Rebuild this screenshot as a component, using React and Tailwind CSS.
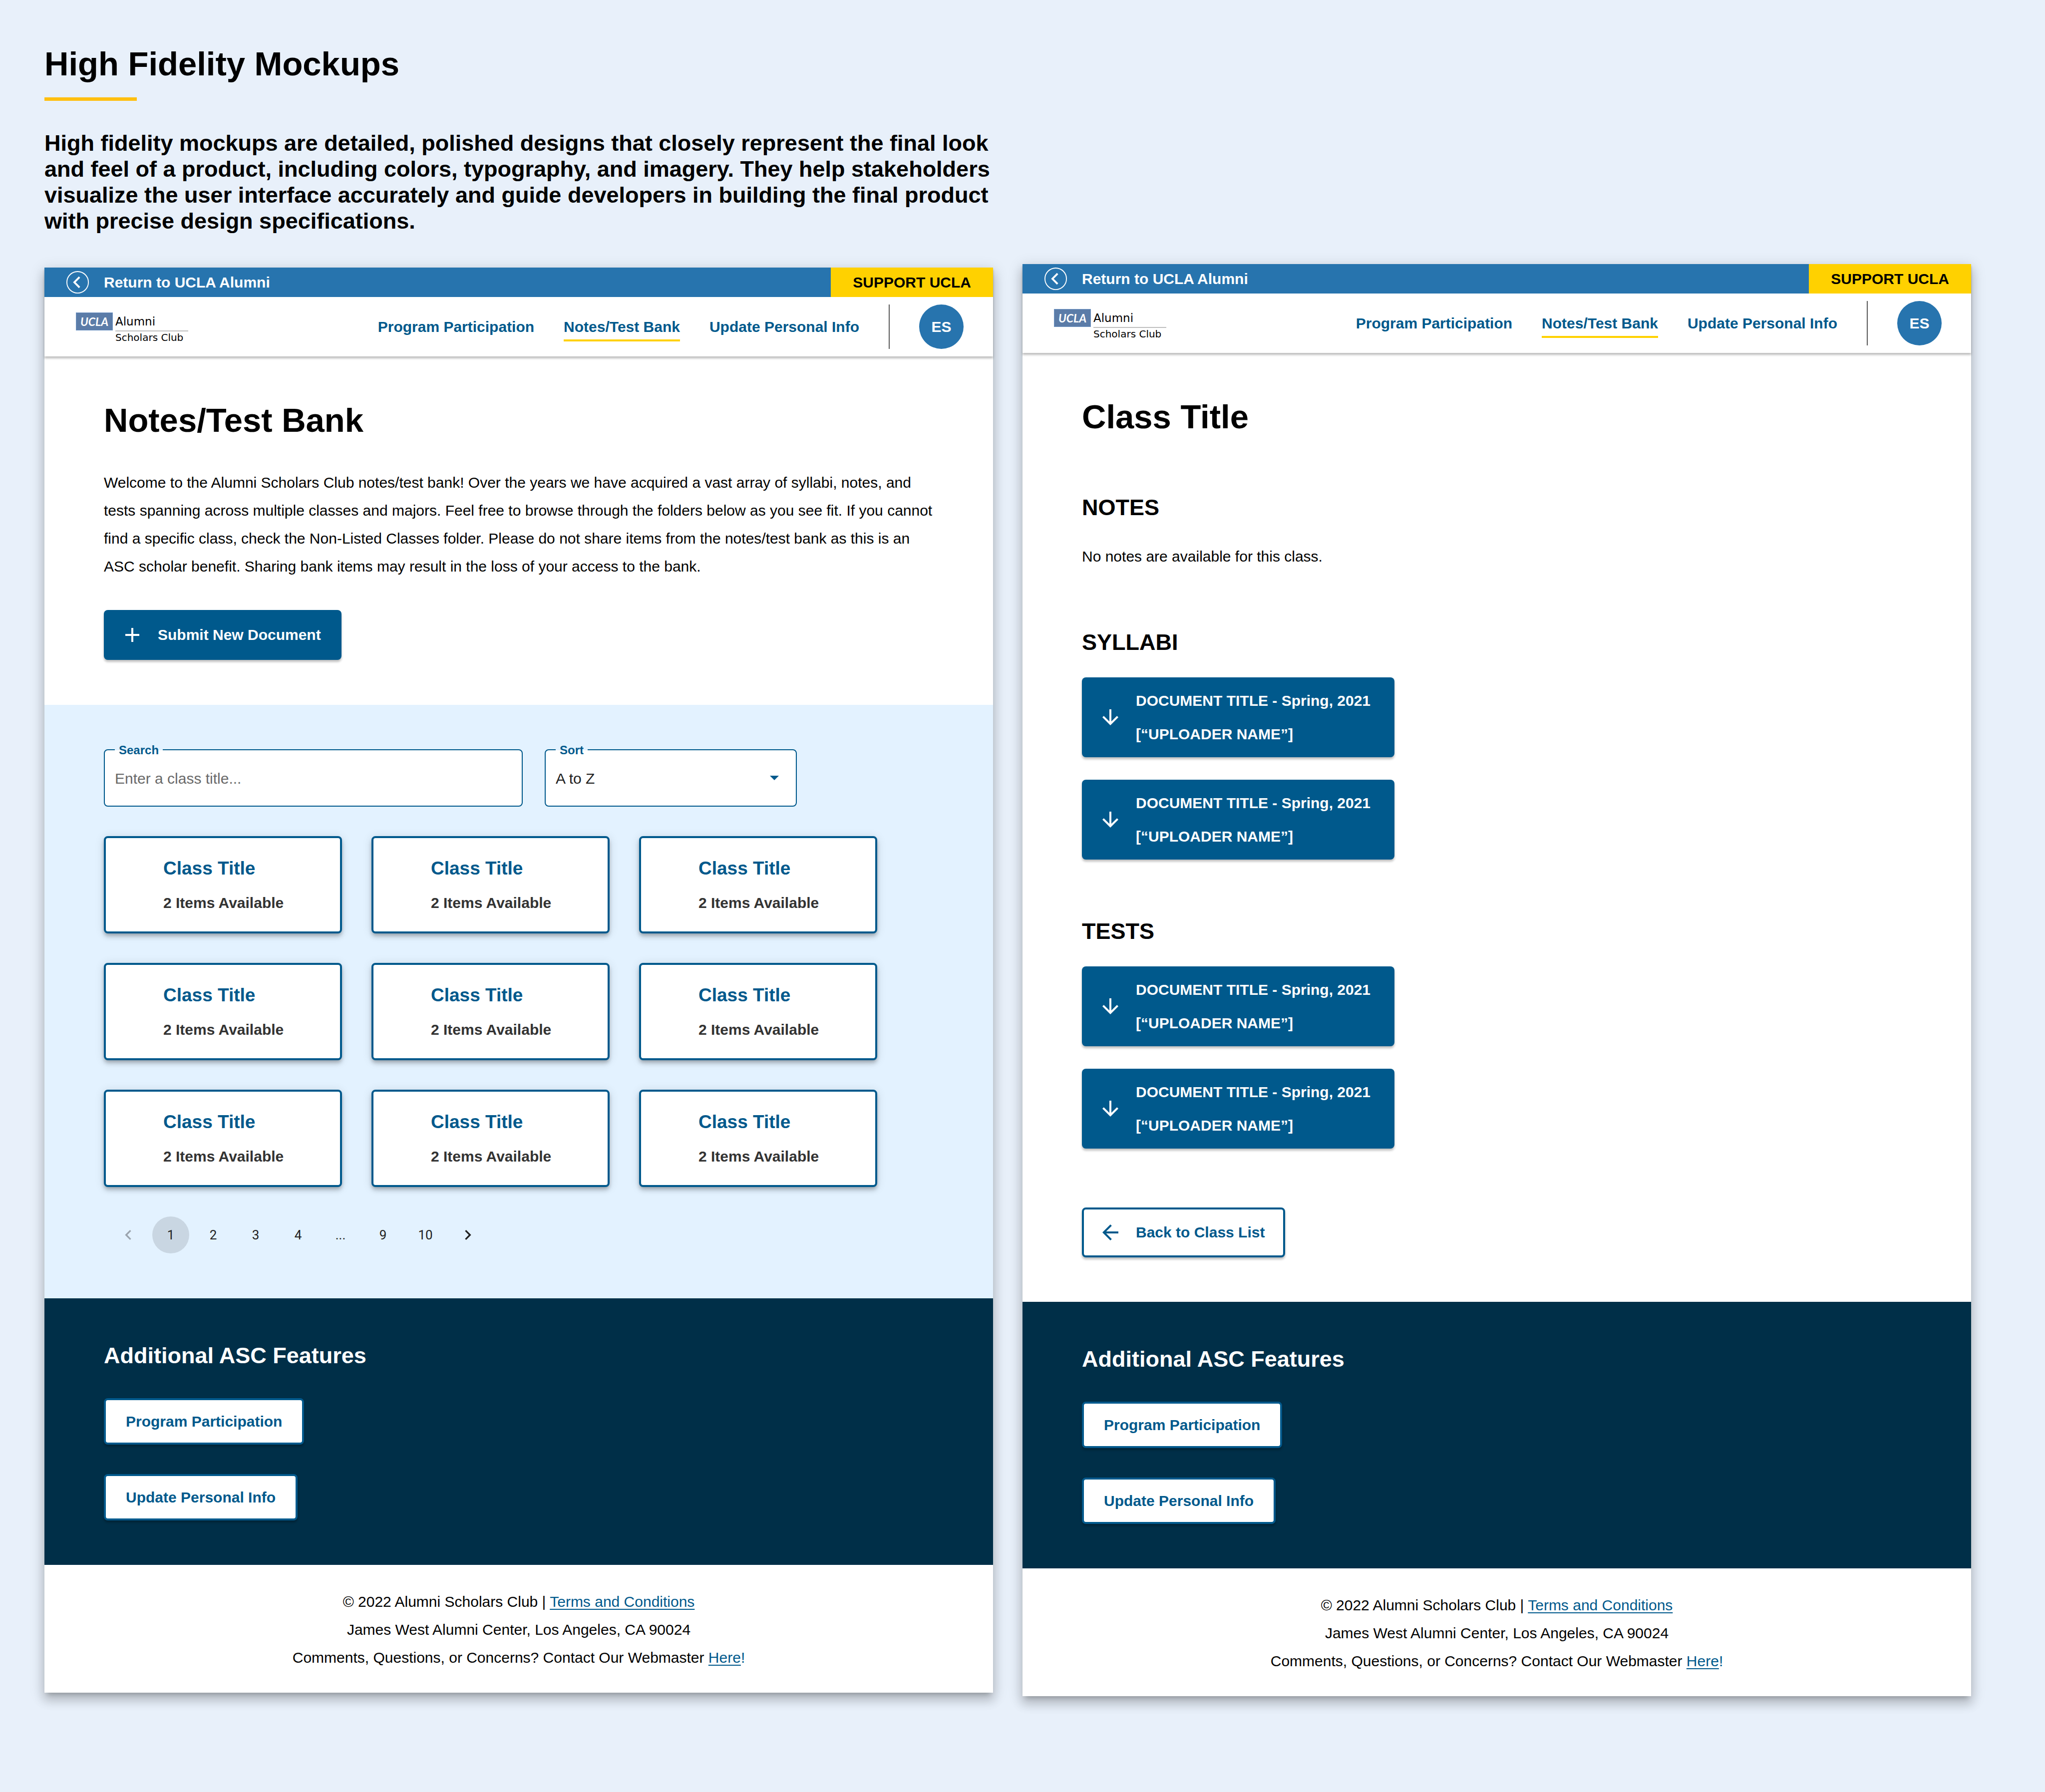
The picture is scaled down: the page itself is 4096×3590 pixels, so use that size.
const NAV = [
  { label: "Program Participation" },
  { label: "Notes/Test Bank", active: true },
  { label: "Update Personal Info" },
];

const CLASSES = Array.from({ length: 9 }, (_, i) => ({ id: i, title: "Class Title", items: 2 }));
const PAGES = ["1", "2", "3", "4", "...", "9", "10"];
const DOCS = [
  { id: 1, title: "DOCUMENT TITLE - Spring, 2021", by: "[“UPLOADER NAME”]" },
  { id: 2, title: "DOCUMENT TITLE - Spring, 2021", by: "[“UPLOADER NAME”]" },
];

function Icon({ d, className }) {
  return (
    <svg viewBox="0 0 24 24" className={className} fill="currentColor" aria-hidden="true">
      <path d={d} />
    </svg>
  );
}

const ICONS = {
  plus: "M19 13h-6v6h-2v-6H5v-2h6V5h2v6h6z",
  down: "M20 12l-1.41-1.41L13 16.17V4h-2v12.17l-5.58-5.59L4 12l8 8 8-8z",
  back: "M20 11H7.83l5.59-5.59L12 4l-8 8 8 8 1.41-1.41L7.83 13H20v-2z",
  left: "M15.41 7.41L14 6l-6 6 6 6 1.41-1.41L10.83 12z",
  right: "M10 6L8.59 7.41 13.17 12l-4.58 4.59L10 18l6-6z",
};

function Logo() {
  return (
    <a href="#home" aria-label="UCLA Alumni Scholars Club" className="flex items-start gap-[5px] pt-[5px] font-['DejaVu_Sans',sans-serif] text-black">
      <span className="flex h-9 w-[74px] items-center justify-center border border-[#6f95c4] bg-[#5b7ca8] font-['Lato',sans-serif] text-[23px] font-bold italic text-white">
        UCLA
      </span>
      <span className="flex w-[146px] flex-col">
        <span className="border-b-2 border-[#bfbfbf] text-[23px] leading-9">Alumni</span>
        <span className="text-[20px] leading-6">Scholars Club</span>
      </span>
    </a>
  );
}

function SiteHeader() {
  return (
    <header className="relative shadow-[0_4px_4px_rgba(0,0,0,0.25)]">
      <div className="flex h-[59px] items-stretch justify-between bg-[#2774ae]">
        <a href="#return" className="flex items-center gap-[30px] pl-11 font-bold text-white">
          <svg viewBox="0 0 48 48" className="size-[45px]" fill="none" stroke="currentColor" aria-hidden="true">
            <circle cx="24" cy="24" r="23" strokeWidth="2" />
            <path d="M28 13 17 24l11 11" strokeWidth="4" />
          </svg>
          Return to UCLA Alumni
        </a>
        <a href="#support" className="flex items-center bg-[#ffd100] px-11 font-bold text-black">
          SUPPORT UCLA
        </a>
      </div>
      <div className="flex h-[119px] items-center justify-between bg-white pl-[63px] pr-[59px]">
        <Logo />
        <nav className="flex items-center gap-[59px] font-bold text-[#00598c]">
          {NAV.map((n) => (
            <a key={n.label} href="#nav" className={n.active ? "border-y-4 border-t-transparent border-b-[#ffd100] py-2" : "py-3"}>
              {n.label}
            </a>
          ))}
          <span className="h-[89px] w-0.5 bg-[#5a5a5a]" />
          <button type="button" className="size-[89px] rounded-full bg-[#2774ae] font-bold text-white">
            ES
          </button>
        </nav>
      </div>
    </header>
  );
}

function SiteFooter() {
  return (
    <footer>
      <section className="flex flex-col items-start gap-[59px] bg-[#002f48] px-[119px] py-[89px]">
        <h2 className="text-[45px] font-bold leading-[52px] text-white">Additional ASC Features</h2>
        <OutlineButton>Program Participation</OutlineButton>
        <OutlineButton>Update Personal Info</OutlineButton>
      </section>
      <div className="bg-white pt-[46px] pb-[42px] text-center leading-[56px]">
        <p>
          © 2022 Alumni Scholars Club | <FooterLink>Terms and Conditions</FooterLink>
        </p>
        <p>James West Alumni Center, Los Angeles, CA 90024</p>
        <p>
          Comments, Questions, or Concerns? Contact Our Webmaster <FooterLink>Here</FooterLink>
          <span className="text-[#00598c]">!</span>
        </p>
      </div>
    </footer>
  );
}

function FooterLink({ children }) {
  return (
    <a href="#link" className="text-[#00598c] underline decoration-2 underline-offset-4">
      {children}
    </a>
  );
}

function OutlineButton({ children }) {
  return (
    <button type="button" className="h-[93px] rounded-lg border-4 border-[#00598c] bg-white px-10 font-bold text-[#00598c] shadow-[0_4px_4px_rgba(0,0,0,0.25)]">
      {children}
    </button>
  );
}

function Panel({ children, className = "" }) {
  return (
    <article className={`min-w-0 flex-1 bg-white shadow-[0_9px_9px_-6px_rgba(0,0,0,0.2),0_15px_19px_2px_rgba(0,0,0,0.14),0_6px_26px_4px_rgba(0,0,0,0.12)] ${className}`}>
      <SiteHeader />
      {children}
      <SiteFooter />
    </article>
  );
}

function Field({ id, label, className, children }) {
  return (
    <div className={`relative h-[115px] rounded-lg border-2 border-[#00598c] bg-white ${className}`}>
      <label htmlFor={id} className="absolute -top-[14px] left-5 bg-linear-to-b from-[#e3f2ff] from-50% to-white to-50% px-2 text-2xl leading-7 font-bold text-[#00598c]">
        {label}
      </label>
      {children}
    </div>
  );
}

function ClassCard({ title, items }) {
  return (
    <button type="button" className="flex h-[195px] flex-col items-start justify-center gap-[29px] rounded-lg border-4 border-[#00598c] bg-white px-[115px] text-left font-bold shadow-[0_4px_7px_-2px_rgba(0,0,0,0.2),0_7px_9px_rgba(0,0,0,0.14),0_2px_19px_rgba(0,0,0,0.12)]">
      <span className="text-[37px] leading-[44px] text-[#00598c]">{title}</span>
      <span className="leading-9 whitespace-nowrap text-[#333]">{items} Items Available</span>
    </button>
  );
}

function Pagination() {
  return (
    <nav aria-label="Pages" className="flex items-center gap-[11px] pl-3 font-['Roboto',sans-serif] text-[26px] text-[#212121]">
      <button type="button" aria-label="Previous page" disabled className="flex size-[74px] items-center justify-center text-[#9ba4ae]">
        <Icon d={ICONS.left} className="size-10" />
      </button>
      {PAGES.map((p, i) => (
        <button key={p} type="button" className={`size-[74px] rounded-full ${i === 0 ? "bg-[#c9d6e2]" : ""}`}>
          {p}
        </button>
      ))}
      <button type="button" aria-label="Next page" className="flex size-[74px] items-center justify-center">
        <Icon d={ICONS.right} className="size-10" />
      </button>
    </nav>
  );
}

function ClassListPanel() {
  return (
    <Panel className="mt-[7px]">
      <section className="flex flex-col items-start gap-[59px] px-[119px] pt-[89px] pb-[90px]">
        <h1 className="text-[67px] font-bold leading-[77px]">Notes/Test Bank</h1>
        <p className="max-w-[1670px] leading-[56px]">
          Welcome to the Alumni Scholars Club notes/test bank! Over the years we have acquired a vast array of syllabi, notes,
          and tests spanning across multiple classes and majors. Feel free to browse through the folders below as you see fit.
          If you cannot find a specific class, check the Non-Listed Classes folder. Please do not share items from the
          notes/test bank as this is an ASC scholar benefit. Sharing bank items may result in the loss of your access to the
          bank.
        </p>
        <button type="button" className="flex h-[100px] items-center gap-[27px] rounded-lg bg-[#00598c] pl-[33px] pr-[41px] font-bold text-white shadow-[0_4px_4px_rgba(0,0,0,0.25)]">
          <Icon d={ICONS.plus} className="size-12" />
          Submit New Document
        </button>
      </section>
      <section className="flex flex-col gap-[59px] bg-[#e3f2ff] px-[119px] pt-[89px] pb-[90px]">
        <div className="flex gap-11">
          <Field id="search" label="Search" className="w-[839px]">
            <input id="search" type="text" placeholder="Enter a class title..." className="size-full rounded-lg bg-transparent px-5 pt-0.5 outline-none placeholder:text-[#696969]" />
          </Field>
          <Field id="sort" label="Sort" className="w-[505px]">
            <select id="sort" className="size-full appearance-none rounded-lg bg-transparent px-5 pt-0.5 text-[#212121] outline-none">
              <option>A to Z</option>
            </select>
            <svg viewBox="0 0 20 10" className="pointer-events-none absolute top-[51px] right-[34px] h-[9px] w-[18px]" fill="#00598c" aria-hidden="true">
              <path d="M0 0h20L10 10z" />
            </svg>
          </Field>
        </div>
        <div className="grid grid-cols-[repeat(3,477px)] gap-[59px]">
          {CLASSES.map((c) => (
            <ClassCard key={c.id} {...c} />
          ))}
        </div>
        <Pagination />
      </section>
    </Panel>
  );
}

function DocGroup({ title, children }) {
  return (
    <section className="flex flex-col items-start gap-11">
      <h2 className="text-[45px] font-bold leading-[52px]">{title}</h2>
      {children}
    </section>
  );
}

function DocList() {
  return (
    <ul className="flex flex-col gap-[45px]">
      {DOCS.map((d) => (
        <li key={d.id}>
          <button type="button" className="flex h-[160px] items-center gap-[27px] rounded-lg bg-[#00598c] pl-[33px] pr-12 text-left leading-[67px] font-bold text-white shadow-[0_4px_4px_rgba(0,0,0,0.25)]">
            <Icon d={ICONS.down} className="size-12" />
            <span className="flex flex-col">
              <span>{d.title}</span>
              <span>{d.by}</span>
            </span>
          </button>
        </li>
      ))}
    </ul>
  );
}

function ClassDetailPanel() {
  return (
    <Panel>
      <div className="flex flex-col items-start gap-[118px] px-[119px] py-[89px]">
        <h1 className="text-[67px] font-bold leading-[77px]">Class Title</h1>
        <DocGroup title="NOTES">
          <p className="leading-[56px]">No notes are available for this class.</p>
        </DocGroup>
        <DocGroup title="SYLLABI">
          <DocList />
        </DocGroup>
        <DocGroup title="TESTS">
          <DocList />
        </DocGroup>
        <button type="button" className="flex h-[100px] items-center gap-[27px] rounded-lg border-4 border-[#00598c] bg-white pl-[29px] pr-[37px] font-bold text-[#00598c] shadow-[0_4px_4px_rgba(0,0,0,0.25)]">
          <Icon d={ICONS.back} className="size-12" />
          Back to Class List
        </button>
      </div>
    </Panel>
  );
}

export default function App() {
  return (
    <main className="min-h-screen bg-[#e8f0fa] pt-[89px] pr-[148px] pb-[89px] pl-[89px] font-['Liberation_Sans',Arial,sans-serif] text-[30px] leading-[34px] text-black">
      <h1 className="text-[67px] font-bold leading-[77px]">High Fidelity Mockups</h1>
      <div className="mt-[29px] h-[7px] w-[185px] bg-[#ffbf0f]" />
      <p className="mt-[59px] max-w-[1940px] text-[45px] font-bold leading-[52px]">
        High fidelity mockups are detailed, polished designs that closely represent the final look and feel of a product,
        including colors, typography, and imagery. They help stakeholders visualize the user interface accurately and guide
        developers in building the final product with precise design specifications.
      </p>
      <div className="mt-[60px] flex items-start gap-[59px]">
        <ClassListPanel />
        <ClassDetailPanel />
      </div>
    </main>
  );
}
